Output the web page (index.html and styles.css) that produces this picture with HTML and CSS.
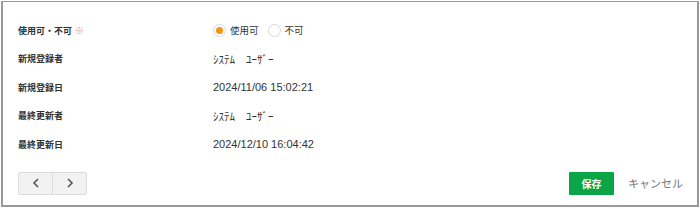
FILE: index.html
```html
<!DOCTYPE html>
<html lang="ja">
<head>
    <meta charset="UTF-8">
    <title>詳細</title>
    <link rel="stylesheet" href="styles.css">
</head>
<body>
    <div class="panel">
        <div class="rows">
            <div class="row">
                <div class="label">使用可・不可 <span class="req">※</span></div>
                <div class="value radios">
                    <label class="radio"><span class="dot checked"></span>使用可</label>
                    <label class="radio"><span class="dot"></span>不可</label>
                </div>
            </div>
            <div class="row">
                <div class="label">新規登録者</div>
                <div class="value">ｼｽﾃﾑ　ﾕｰｻﾞｰ</div>
            </div>
            <div class="row">
                <div class="label">新規登録日</div>
                <div class="value">2024/11/06 15:02:21</div>
            </div>
            <div class="row">
                <div class="label">最終更新者</div>
                <div class="value">ｼｽﾃﾑ　ﾕｰｻﾞｰ</div>
            </div>
            <div class="row">
                <div class="label">最終更新日</div>
                <div class="value">2024/12/10 16:04:42</div>
            </div>
        </div>
        <div class="footer">
            <div class="pager">
                <button class="prev">
                    <svg width="8" height="10" viewBox="0 0 8 10"><path d="M6 1 L2 5 L6 9" fill="none" stroke="#555" stroke-width="1.6"/></svg>
                </button>
                <button class="next">
                    <svg width="8" height="10" viewBox="0 0 8 10"><path d="M2 1 L6 5 L2 9" fill="none" stroke="#555" stroke-width="1.6"/></svg>
                </button>
            </div>
            <div class="actions">
                <button class="save">保存</button>
                <button class="cancel">キャンセル</button>
            </div>
        </div>
    </div>
</body>
</html>
```

FILE: styles.css
```css
body {
    margin: 0;
    font-family: "Liberation Sans", "Noto Sans CJK JP", sans-serif;
    color: #333;
    background: #fff;
}
.panel {
    margin: 1px 1px 0 1px;
    height: 206px;
    box-sizing: border-box;
    border: 2px solid #999;
    border-top-width: 1px;
    padding: 14px 14px 0 15px;
}
.row {
    display: flex;
    align-items: center;
    height: 28.5px;
}
.label {
    width: 195px;
    font-size: 9px;
    font-weight: bold;
    font-family: "Noto Sans CJK JP", sans-serif;
    color: #333;
}
.req {
    color: #f28a8a;
    font-weight: normal;
    margin-left: 1px;
}
.value {
    font-size: 11px;
    color: #333;
}
.radios {
    display: flex;
    gap: 9px;
}
.radio {
    display: flex;
    align-items: center;
    gap: 4px;
    font-size: 9.5px;
    font-family: "Noto Sans CJK JP", sans-serif;
}
.dot {
    width: 13px;
    height: 13px;
    box-sizing: border-box;
    border: 1px solid #d8d8d8;
    border-radius: 50%;
    display: flex;
    align-items: center;
    justify-content: center;
}
.dot.checked::after {
    content: "";
    width: 7px;
    height: 7px;
    border-radius: 50%;
    background: #f7940f;
}
.footer {
    display: flex;
    justify-content: space-between;
    align-items: center;
    margin-top: 13px;
}
.pager {
    display: flex;
    border: 1px solid #dcdcdc;
    border-radius: 2px;
    background: #f2f2f2;
}
.pager button {
    height: 21px;
    border: none;
    background: none;
    padding: 0;
    display: flex;
    align-items: center;
    justify-content: center;
}
.pager .prev {
    width: 34px;
    border-right: 1px solid #dcdcdc;
}
.pager .next {
    width: 33px;
}
.actions {
    display: flex;
    align-items: center;
    gap: 14px;
}
.save {
    width: 45px;
    height: 23px;
    border: none;
    border-radius: 1px;
    background: #0ca545;
    color: #fff;
    font-weight: bold;
    font-size: 10px;
    font-family: "Noto Sans CJK JP", sans-serif;
}
.cancel {
    border: none;
    background: none;
    padding: 0;
    color: #777;
    font-size: 11px;
    font-family: "Noto Sans CJK JP", sans-serif;
}
```
